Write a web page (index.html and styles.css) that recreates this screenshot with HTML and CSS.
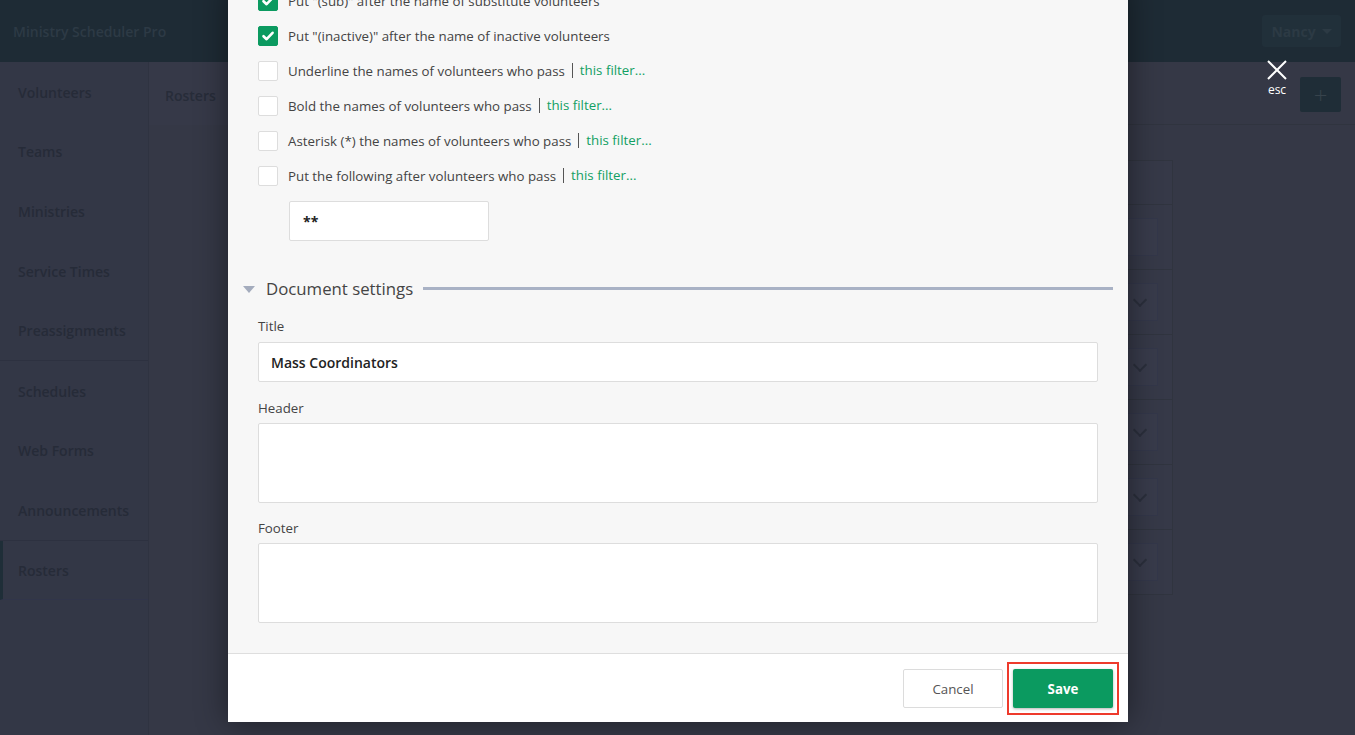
FILE: index.html
```html
<!DOCTYPE html>
<html lang="en">
<head>
<meta charset="utf-8">
<title>Ministry Scheduler Pro - Rosters</title>
<link rel="stylesheet" href="styles.css">
</head>
<body>
<div class="app">
  <header class="topbar">
    <div class="brand">Ministry Scheduler Pro</div>
    <div class="user">Nancy <span class="caret"></span></div>
  </header>
  <div class="layout">
    <nav class="sidebar">
      <div class="group">
        <div class="nav-item">Volunteers</div>
        <div class="nav-item">Teams</div>
        <div class="nav-item">Ministries</div>
        <div class="nav-item">Service Times</div>
        <div class="nav-item">Preassignments</div>
      </div>
      <div class="group">
        <div class="nav-item">Schedules</div>
        <div class="nav-item">Web Forms</div>
        <div class="nav-item">Announcements</div>
      </div>
      <div class="group">
        <div class="nav-item active">Rosters</div>
      </div>
    </nav>
    <main class="main">
      <div class="tabbar">
        <div class="tab">Rosters</div>
        <div class="add-btn">+</div>
      </div>
      <div class="content">
        <div class="list">
          <div class="list-row head"></div>
          <div class="list-row"><div class="field"></div></div>
          <div class="list-row"><div class="field"><span class="chev"></span></div></div>
          <div class="list-row"><div class="field"><span class="chev"></span></div></div>
          <div class="list-row"><div class="field"><span class="chev"></span></div></div>
          <div class="list-row"><div class="field"><span class="chev"></span></div></div>
          <div class="list-row"><div class="field"><span class="chev"></span></div></div>
        </div>
      </div>
    </main>
  </div>
</div>

<div class="close-esc">
  <svg width="20" height="20" viewBox="0 0 20 20"><path d="M1 1 L19 19 M19 1 L1 19" stroke="#fff" stroke-width="2" fill="none"/></svg>
  <span>esc</span>
</div>

<div class="modal">
  <div class="modal-body">
    <div class="check-row"><span class="cb checked"><svg width="20" height="20" viewBox="0 0 20 20"><path d="M5.5 10.2 L8.6 13.2 L14.6 6.8" stroke="#fff" stroke-width="2.6" fill="none" stroke-linecap="round" stroke-linejoin="round"/></svg></span><span class="cb-label">Put "(sub)" after the name of substitute volunteers</span></div>
    <div class="check-row"><span class="cb checked"><svg width="20" height="20" viewBox="0 0 20 20"><path d="M5.5 10.2 L8.6 13.2 L14.6 6.8" stroke="#fff" stroke-width="2.6" fill="none" stroke-linecap="round" stroke-linejoin="round"/></svg></span><span class="cb-label">Put "(inactive)" after the name of inactive volunteers</span></div>
    <div class="check-row"><span class="cb"></span><span class="cb-label">Underline the names of volunteers who pass</span><span class="filter">this filter...</span></div>
    <div class="check-row"><span class="cb"></span><span class="cb-label">Bold the names of volunteers who pass</span><span class="filter">this filter...</span></div>
    <div class="check-row"><span class="cb"></span><span class="cb-label">Asterisk (*) the names of volunteers who pass</span><span class="filter">this filter...</span></div>
    <div class="check-row"><span class="cb"></span><span class="cb-label">Put the following after volunteers who pass</span><span class="filter">this filter...</span></div>
    <div class="suffix-input">**</div>

    <div class="section-head">
      <span class="tri"></span>
      <span class="section-title">Document settings</span>
      <span class="section-line"></span>
    </div>

    <div class="label first">Title</div>
    <div class="text-input">Mass Coordinators</div>
    <div class="label">Header</div>
    <div class="textarea"></div>
    <div class="label last">Footer</div>
    <div class="textarea"></div>
  </div>
  <div class="modal-footer">
    <div class="btn cancel">Cancel</div>
    <div class="btn save">Save</div>
  </div>
</div>
</body>
</html>
```

FILE: styles.css
```css
html, body {
  margin: 0;
  padding: 0;
}
body {
  width: 1355px;
  height: 735px;
  overflow: hidden;
  position: relative;
  background: #353846;
  font-family: "Open Sans", "Liberation Sans", sans-serif;
}

/* ---------- background app (dimmed) ---------- */
.app {
  height: 735px;
  display: flex;
  flex-direction: column;
}
.topbar {
  height: 62px;
  flex: 0 0 62px;
  background: #1e2b35;
  display: flex;
  align-items: center;
  justify-content: space-between;
  padding: 0 14px 0 13px;
}
.brand {
  color: #2d3a45;
  font-weight: 600;
  font-size: 14px;
}
.user {
  height: 32px;
  width: 79px;
  box-sizing: border-box;
  background: #21303a;
  border-radius: 3px;
  color: #2c3a44;
  font-weight: 700;
  font-size: 14px;
  display: flex;
  align-items: center;
  justify-content: center;
  gap: 6px;
}
.caret {
  width: 0;
  height: 0;
  border-left: 5px solid transparent;
  border-right: 5px solid transparent;
  border-top: 5px solid #2c3a44;
}
.layout {
  flex: 1;
  display: flex;
}
.sidebar {
  width: 148px;
  flex: 0 0 148px;
  background: #333746;
  border-right: 1px solid #2f3341;
}
.group + .group {
  border-top: 1px solid #2d3140;
}
.nav-item {
  height: 59.6px;
  display: flex;
  align-items: center;
  padding-left: 18px;
  padding-top: 1px;
  color: #262b38;
  font-weight: 600;
  font-size: 14px;
  box-sizing: border-box;
}
.nav-item.active {
  border-left: 3px solid #1f2e38;
  padding-left: 15px;
  border-bottom: 1px solid #31354a;
}
.main {
  flex: 1;
  display: flex;
  flex-direction: column;
}
.tabbar {
  height: 63px;
  box-sizing: border-box;
  border-bottom: 1px solid #30343f;
  display: flex;
  align-items: center;
  justify-content: space-between;
  padding-right: 14px;
}
.tab {
  height: 63px;
  box-sizing: border-box;
  padding: 4px 16px 0 16px;
  display: flex;
  align-items: center;
  color: #272c39;
  font-weight: 600;
  font-size: 14px;
  background: #363948;
  border-right: 1px solid #30343f;
  width: 120px;
}
.add-btn {
  width: 41px;
  height: 35px;
  background: #1f2d37;
  border-radius: 2px;
  color: #37434c;
  font-size: 24px;
  font-weight: 300;
  display: flex;
  align-items: center;
  justify-content: center;
  margin-top: 3px;
}
.content {
  padding: 35px 182px 0 120px;
}
.list {
  border: 1px solid #30343f;
  background: #363948;
}
.list-row {
  height: 65px;
  box-sizing: border-box;
  border-top: 1px solid #30343f;
  display: flex;
  align-items: center;
  justify-content: flex-end;
  padding-right: 14px;
}
.list-row.head {
  height: 43px;
  border-top: 0;
}
.field {
  width: 300px;
  height: 38px;
  background: #383b4b;
  border: 1px solid #33374a;
  box-sizing: border-box;
  display: flex;
  align-items: center;
  justify-content: flex-end;
  padding-right: 12px;
}
.chev {
  width: 8px;
  height: 8px;
  border-right: 2px solid #2b2f3c;
  border-bottom: 2px solid #2b2f3c;
  transform: rotate(45deg);
  margin-top: -5px;
}

/* ---------- close (esc) ---------- */
.close-esc {
  position: absolute;
  left: 1262px;
  top: 60px;
  width: 30px;
  display: flex;
  flex-direction: column;
  align-items: center;
  color: #fff;
  font-size: 12px;
  line-height: 14px;
}
.close-esc span {
  margin-top: 3px;
}

/* ---------- modal ---------- */
.modal {
  position: absolute;
  left: 228px;
  top: -17px;
  width: 900px;
  background: #f7f7f7;
  box-shadow: 0 0 30px rgba(0, 0, 0, 0.45);
}
.modal-body {
  padding: 0 30px 30px 30px;
}
.check-row {
  height: 35px;
  display: flex;
  align-items: center;
  font-size: 13.3px;
  color: #444;
}
.cb {
  width: 20px;
  height: 20px;
  box-sizing: border-box;
  background: #fff;
  border: 1px solid #ddd;
  border-radius: 2px;
  margin-right: 10px;
  flex: 0 0 auto;
  display: flex;
}
.cb.checked {
  background: #0b9a60;
  border-color: #0b9a60;
}
.cb.checked svg {
  margin: -1px;
}
.filter {
  color: #12a063;
  border-left: 1px solid #555;
  margin-left: 7px;
  padding-left: 7px;
  line-height: 15px;
}
.suffix-input {
  margin: 8px 0 0 31px;
  width: 200px;
  height: 40px;
  box-sizing: border-box;
  background: #fff;
  border: 1px solid #ddd;
  border-radius: 2px;
  padding: 0 13px;
  display: flex;
  align-items: center;
  font-size: 14px;
  font-weight: 700;
  color: #222;
}
.section-head {
  margin: 36px -15px 0 -15px;
  height: 24px;
  display: flex;
  align-items: center;
}
.tri {
  width: 0;
  height: 0;
  border-left: 6px solid transparent;
  border-right: 6px solid transparent;
  border-top: 7px solid #a4acbd;
  margin-right: 11px;
}
.section-title {
  font-size: 16.8px;
  color: #444;
  margin-top: -2px;
}
.section-line {
  flex: 1;
  height: 3px;
  background: #a9b2c5;
  margin-left: 10px;
  margin-top: -1px;
}
.label {
  font-size: 13.3px;
  color: #444;
  line-height: 18px;
  margin: 17px 0 6px 0;
}
.label.first {
  margin: 16px 0 7px 0;
}
.label.last {
  margin: 16px 0 6px 0;
}
.text-input {
  height: 40px;
  box-sizing: border-box;
  background: #fff;
  border: 1px solid #ddd;
  border-radius: 2px;
  padding: 0 12px;
  display: flex;
  align-items: center;
  font-size: 14px;
  font-weight: 600;
  color: #222;
}
.textarea {
  height: 80px;
  box-sizing: border-box;
  background: #fff;
  border: 1px solid #ddd;
  border-radius: 2px;
}
.modal-footer {
  border-top: 1px solid #dedede;
  background: #fff;
  height: 69px;
  box-sizing: border-box;
  padding: 15px 15px 0 0;
  display: flex;
  justify-content: flex-end;
  align-items: flex-start;
  gap: 10px;
}
.btn {
  height: 39px;
  box-sizing: border-box;
  display: flex;
  align-items: center;
  justify-content: center;
  font-size: 13.3px;
  border-radius: 2px;
}
.btn.cancel {
  width: 100px;
  background: #fff;
  border: 1px solid #dcdcdc;
  color: #555;
}
.btn.save {
  position: relative;
  width: 100px;
  background: #0b9a60;
  color: #fff;
  font-weight: 700;
  box-shadow: 0 1px 3px rgba(0, 0, 0, 0.3);
}
.btn.save::after {
  content: "";
  position: absolute;
  left: -6px;
  top: -7px;
  right: -6px;
  bottom: -7px;
  border: 2px solid #ee3a2c;
}
```
